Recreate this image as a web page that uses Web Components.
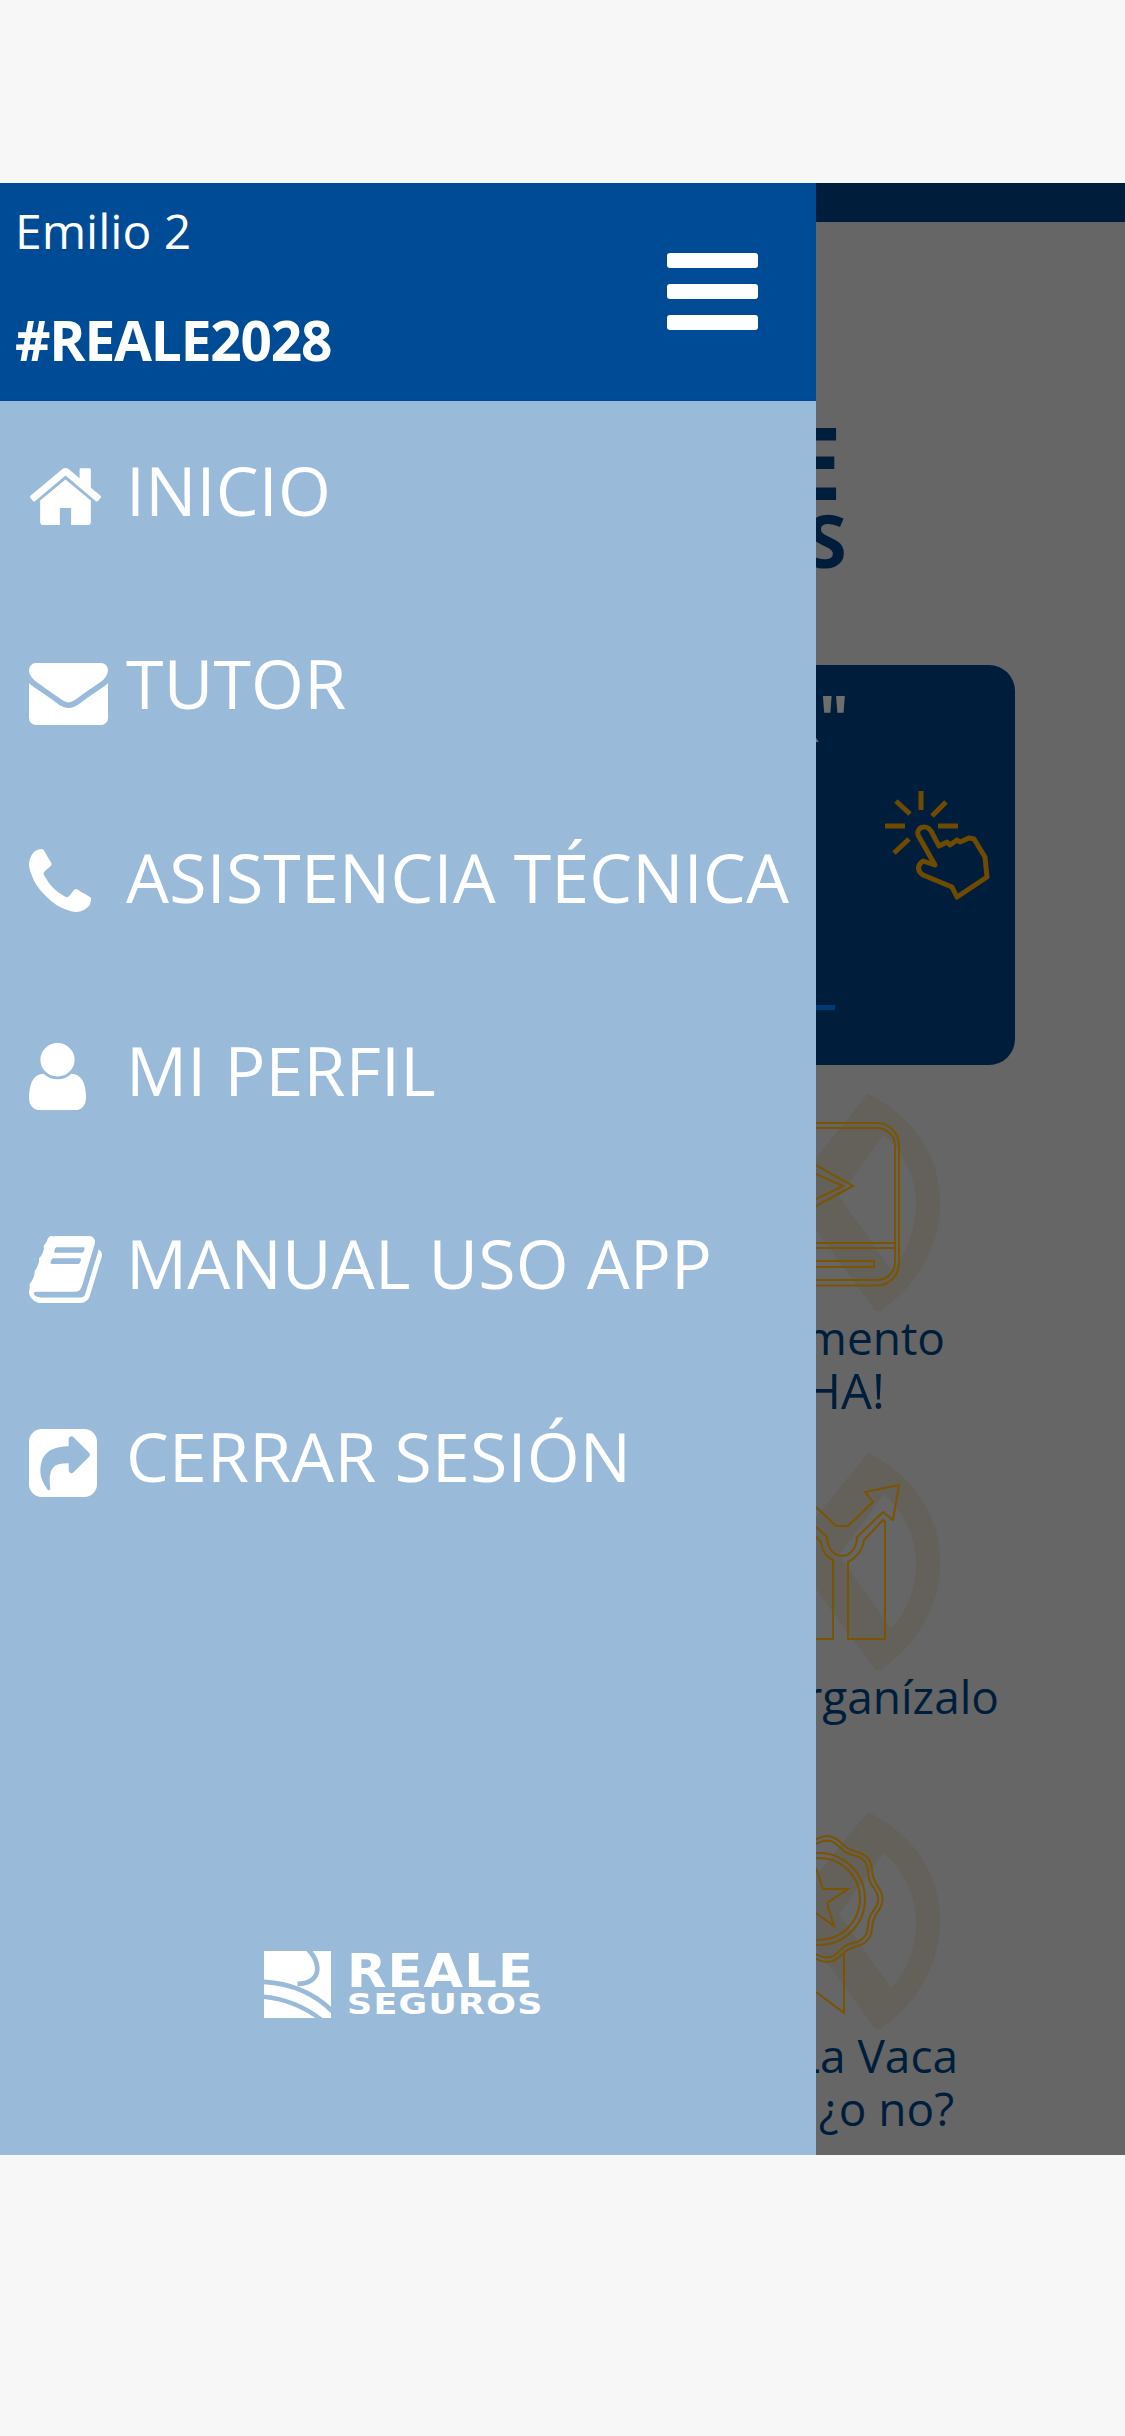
<!DOCTYPE html>
<html lang="es">
<head>
<meta charset="utf-8">
<title>Reale</title>
<style>
  html, body { margin: 0; padding: 0; background: #f7f7f7; }
</style>
</head>
<body>
<app-screen></app-screen>

<script>
const ICONS = {
  home: 'M1472 992v480q0 26-19 45t-45 19h-384v-384h-256v384h-384q-26 0-45-19t-19-45v-480q0-1 .5-3t.5-3l575-474 575 474q1 2 1 6zm223-69l-62 74q-8 9-21 11h-3q-13 0-21-7l-692-577-692 577q-12 8-24 7-13-2-21-11l-62-74q-8-10-7-23.500t11-21.500l719-599q32-26 76-26t76 26l244 204v-195q0-14 9-23t23-9h192q14 0 23 9t9 23v408l219 182q10 8 11 21.500t-7 23.500z',
  mail: 'M1792 710v794q0 66-47 113t-113 47h-1472q-66 0-113-47t-47-113v-794q44 49 101 87 362 246 497 345 57 42 92.500 65.500t94.500 48 110 24.500h2q51 0 110-24.500t94.500-48 92.500-65.500q170-123 498-345 57-39 100-87zm0-294q0 79-49 151t-122 123q-376 261-468 325-10 7-42.500 30.500t-54 38-52 32.500-57.500 27-50 9h-2q-23 0-50-9t-57.500-27-52-32.500-54-38-42.500-30.500q-91-64-262-182.500t-205-142.500q-62-42-117-115.500t-55-136.500q0-78 41.500-130t118.500-52h1472q65 0 112.500 47t47.500 113z',
  phone: 'M1600 1240q0 27-10 70.500t-21 68.500q-21 50-122 106-94 51-186 51-27 0-53-3.500t-57.500-12.500-47-14.500-55.500-20.500-49-18q-98-35-175-83-127-79-264-216t-216-264q-48-77-83-175-3-9-18-49t-20.500-55.500-14.500-47-12.500-57.500-3.500-53q0-92 51-186 56-101 106-122 25-11 68.500-21t70.500-10q14 0 21 3 18 6 53 76 11 19 30 54t35 63.500 31 53.500q3 4 17.500 25t21.500 35.500 7 28.500q0 20-28.500 50t-62 55-62 53-28.500 46q0 9 5 22.500t8.500 20.500 14 24 11.500 19q76 137 174 235t235 174q2 1 19 11.500t24 14 20.500 8.500 22.500 5q18 0 46-28.500t53-62 55-62 50-28.500q14 0 28.500 7t35.500 21.500 25 17.500q25 15 53.500 31t63.500 35 54 30q70 35 76 53 3 7 3 21z',
  user: 'M1536 1399q0 109-62.500 187t-150.500 78h-854q-88 0-150.500-78t-62.500-187q0-85 8.500-160.500t31.500-152 58.500-131 94-89 134.500-34.500q131 128 313 128t313-128q76 0 134.500 34.500t94 89 58.500 131 31.500 152 8.500 160.500zm-256-887q0 159-112.500 271.500t-271.500 112.500-271.500-112.500-112.500-271.500 112.500-271.500 271.500-112.500 271.500 112.500 112.500 271.500z',
  book: 'M1703 478q40 57 18 129l-275 906q-19 64-76.500 107.500t-122.500 43.500h-923q-77 0-148.500-53.500t-99.500-131.500q-24-67-2-127 0-4 3-27t4-37q1-8-3-21.500t-3-19.500q2-11 8-21t16.500-23.500 16.500-23.500q23-38 45-91.500t30-91.500q3-10 .5-30t-.5-28q3-11 17-28t17-23q21-36 42-92t25-90q1-9-2.500-32t.5-28q4-13 22-30.500t22-22.500q19-26 42.500-84.500t27.500-96.500q1-8-3-25.500t-2-26.500q2-8 9-18t18-23 17-21q8-12 16.500-30.500t15-35 16-36 19.500-32 26.500-23.500 36-11.500 47.500 5.500l-1 3q38-9 51-9h761q74 0 114 56t18 130l-274 906q-36 119-71.500 153.500t-128.500 34.500h-869q-27 0-38 15-11 16-1 43 24 70 144 70h923q29 0 56-15.500t35-41.500l300-987q7-22 5-57 38 15 59 43zm-1064 2q-4 13 2 22.500t20 9.500h608q13 0 25.500-9.500t16.500-22.500l21-64q4-13-2-22.500t-20-9.500h-608q-13 0-25.500 9.500t-16.500 22.500zm-83 256q-4 13 2 22.500t20 9.500h608q13 0 25.500-9.500t16.500-22.500l21-64q4-13-2-22.500t-20-9.500h-608q-13 0-25.500 9.500t-16.500 22.500z',
  share: 'M1005 1283l352-352q19-19 19-45t-19-45l-352-352q-30-31-69-14-40 17-40 59v160q-119 0-216 19.500t-162.500 51-114 79-76.500 95.500-44.500 109-21.500 111.500-5 110.500q0 181 167 404 11 12 25 12 7 0 13-3 22-9 19-33-44-354 62-473 46-52 130-75.500t224-23.500v160q0 42 40 59 12 5 24 5 26 0 45-19zm531-691v960q0 119-84.500 203.500t-203.500 84.500h-960q-119 0-203.500-84.500t-84.500-203.500v-960q0-119 84.500-203.500t203.500-84.500h960q119 0 203.500 84.500t84.500 203.500z'
};

class AppScreen extends HTMLElement {
  constructor() {
    super();
    this.attachShadow({ mode: 'open' });
    this.shadowRoot.innerHTML = `
      <style>
        :host {
          display: block;
          height: 2436px;
          box-sizing: border-box;
          padding: 183px 0 281px;
          background: #f7f7f7;
          font-family: "Open Sans", "Noto Sans", sans-serif;
        }
        .row { display: flex; height: 100%; }
      </style>
      <div class="row">
        <side-drawer></side-drawer>
        <dimmed-content></dimmed-content>
      </div>
    `;
  }
}

class SideDrawer extends HTMLElement {
  constructor() {
    super();
    this.attachShadow({ mode: 'open' });
    this.shadowRoot.innerHTML = `
      <style>
        :host {
          display: flex;
          flex-direction: column;
          flex: none;
          width: 816px;
          background: #99bad9;
          color: #fff;
        }
        nav { display: flex; flex-direction: column; gap: 13.3px; }
        reale-logo { margin-top: auto; margin-bottom: 137px; align-self: flex-start; margin-left: 264px; }
      </style>
      <drawer-header name="Emilio 2" tag="#REALE2028"></drawer-header>
      <nav>
        <nav-item icon="home" w="71" h="57" x="1" dy="5">INICIO</nav-item>
        <nav-item icon="mail" w="79" h="62" dy="9.5">TUTOR</nav-item>
        <nav-item icon="phone" w="62" h="63" dy="3">ASISTENCIA TÉCNICA</nav-item>
        <nav-item icon="user" w="57" h="67" dy="5.5">MI PERFIL</nav-item>
        <nav-item icon="book" w="73" h="67" dy="5">MANUAL USO APP</nav-item>
        <nav-item icon="share" w="68" h="68" dy="6">CERRAR SESIÓN</nav-item>
      </nav>
      <reale-logo></reale-logo>
    `;
  }
}

class DrawerHeader extends HTMLElement {
  constructor() {
    super();
    this.attachShadow({ mode: 'open' });
    this.shadowRoot.innerHTML = `
      <style>
        :host {
          display: flex;
          flex: none;
          justify-content: space-between;
          align-items: flex-start;
          height: 218px;
          box-sizing: border-box;
          padding: 18px 58px 0 0;
          background: #004b96;
        }
        .name { font-size: 48px; line-height: 60px; padding-left: 15px; }
        .tag {
          margin-top: 49px;
          padding-left: 15px;
          font-size: 55px;
          line-height: 60px;
          font-weight: 700;
          letter-spacing: -1.2px;
        }
        .menu { display: flex; flex-direction: column; gap: 15.5px; margin-top: 51.5px; }
        .menu i { display: block; width: 91px; height: 15.5px; border-radius: 3px; background: #fff; }
      </style>
      <div>
        <div class="name"></div>
        <div class="tag"></div>
      </div>
      <div class="menu"><i></i><i></i><i></i></div>
    `;
  }

  connectedCallback() {
    this.shadowRoot.querySelector('.name').textContent = this.getAttribute('name');
    this.shadowRoot.querySelector('.tag').textContent = this.getAttribute('tag');
  }
}

class NavItem extends HTMLElement {
  constructor() {
    super();
    this.attachShadow({ mode: 'open' });
    this.shadowRoot.innerHTML = `
      <style>
        :host {
          display: flex;
          align-items: center;
          height: 180px;
          padding-left: 29px;
          font-size: 68px;
          letter-spacing: .2px;
          white-space: nowrap;
        }
        .icon { flex: none; width: 97px; display: flex; }
        svg { display: block; fill: #fff; }
        span { padding-bottom: 3px; }
      </style>
      <div class="icon">
        <svg xmlns="http://www.w3.org/2000/svg" preserveAspectRatio="none"><path/></svg>
      </div>
      <span><slot></slot></span>
    `;
  }

  connectedCallback() {
    const svg = this.shadowRoot.querySelector('svg');
    const path = svg.querySelector('path');
    path.setAttribute('d', ICONS[this.getAttribute('icon')]);
    svg.setAttribute('width', this.getAttribute('w'));
    svg.setAttribute('height', this.getAttribute('h'));
    // the glyphs sit on a 1792 grid with uneven margins, fit the box to the shape
    const box = path.getBBox();
    svg.setAttribute('viewBox', `${box.x} ${box.y} ${box.width} ${box.height}`);
    const icon = this.shadowRoot.querySelector('.icon');
    icon.style.marginTop = (this.getAttribute('dy') * 2) + 'px';
    if (this.hasAttribute('x')) {
      icon.style.paddingLeft = this.getAttribute('x') + 'px';
      icon.style.width = (97 - this.getAttribute('x')) + 'px';
    }
  }
}

class RealeLogo extends HTMLElement {
  constructor() {
    super();
    this.attachShadow({ mode: 'open' });
    this.shadowRoot.innerHTML = `
      <style>
        :host { display: flex; gap: 16px; color: #fff; font-family: "DejaVu Sans", sans-serif; font-weight: 700; }
        svg { display: block; flex: none; }
        .words { display: flex; flex-direction: column; }
        .big, .small { white-space: nowrap; transform-origin: left center; }
        .big { font-size: 46.5px; line-height: 40px; height: 40px; letter-spacing: 1px; transform: scaleX(1.1); }
        .small { font-size: 27.5px; line-height: 26px; letter-spacing: 1px; transform: scaleX(1.27); }
      </style>
      <svg width="67" height="67" viewBox="0 0 200 200" xmlns="http://www.w3.org/2000/svg">
        <rect width="200" height="200" fill="#fff"/>
        <g fill="none" stroke="#99bad9">
          <path stroke-width="14" d="M132 -4C165 30 168 70 140 88C128 96 115 98 100 98"/>
          <path stroke-width="14" d="M-4 92C75 96 150 125 206 182"/>
          <path stroke-width="13" d="M-4 136C60 142 120 165 172 206"/>
        </g>
      </svg>
      <div class="words">
        <div class="big">REALE</div>
        <div class="small">SEGUROS</div>
      </div>
    `;
  }
}

class DimmedContent extends HTMLElement {
  constructor() {
    super();
    this.attachShadow({ mode: 'open' });
    this.shadowRoot.innerHTML = `
      <style>
        :host {
          display: block;
          flex: 1;
          min-width: 0;
          background: #666;
          overflow: hidden;
          color: #001e3c;
          font-weight: 700;
        }
        .bar { height: 39px; background: #001e3c; }
        .title { padding-top: 193px; white-space: nowrap; }
        .title div:first-child { font-size: 100px; line-height: 92px; margin-left: -30px; }
        .title div:last-child { font-size: 74px; line-height: 66px; margin-left: -10px; }
        promo-card { margin: 92px 110px 28px -60px; }
      </style>
      <div class="bar"></div>
      <div class="title"><div>E</div><div>S</div></div>
      <promo-card></promo-card>
      <topic-tile kind="video">
        <div>mento</div>
        <div style="margin-right: 60px; font-size: 49px">HA!</div>
      </topic-tile>
      <topic-tile kind="chart"><div>rganízalo</div></topic-tile>
      <topic-tile kind="medal">
        <div style="margin-right: -2px">La Vaca</div>
        <div style="margin-right: 2px">¿o no?</div>
      </topic-tile>
    `;
  }
}

class PromoCard extends HTMLElement {
  constructor() {
    super();
    this.attachShadow({ mode: 'open' });
    this.shadowRoot.innerHTML = `
      <style>
        :host {
          display: block;
          height: 400px;
          box-sizing: border-box;
          padding-top: 21px;
          background: #001e3c;
          border-radius: 26px;
        }
        .head {
          width: 93px;
          display: flex;
          justify-content: flex-end;
          font-size: 64px;
          line-height: 63px;
          font-weight: 700;
          color: #6e6e6e;
        }
        svg { display: block; margin: 21px 0 0 104px; }
        .line { width: 79px; height: 5px; margin-top: 84.5px; background: #003a75; }
      </style>
      <div class="head">R"</div>
      <svg width="150" height="150" viewBox="0 0 150 150" fill="none" stroke="#6e4b00" stroke-width="5" xmlns="http://www.w3.org/2000/svg">
        <path d="M61 21V40M36 31L50 44M86 32L72 46M25 56H45M78 56H98M49 69L34 83"/>
        <path stroke-linejoin="round" d="M58 65C56 58 66 53 71 61L79 76L87 72L90 75L97 70L100 72L109 68L114 69L125 87L127 107L97 127L92 117L63 105C57 101 57 95 63 91L75 95Z"/>
      </svg>
      <div class="line"></div>
    `;
  }
}

function scallop(r) {
  // wavy seal rim around the medal centre
  const pts = [];
  for (let i = 0; i <= 240; i++) {
    const t = i / 240 * Math.PI * 2;
    const rr = r + 2.6 * Math.cos(9 * t);
    pts.push((3 + rr * Math.cos(t)).toFixed(1) + ' ' + (88 + rr * Math.sin(t)).toFixed(1));
  }
  return 'M' + pts.join('L') + 'Z';
}

const TILE_ART = {
  video: `
    <rect x="-100" y="30" width="183" height="162.5" rx="22"/>
    <rect x="-100" y="35" width="179" height="152" rx="18"/>
    <path d="M-5 150H79M-5 155H79M-5 168H58V174H-5"/>
    <path d="M0 72L37 93L0 113M0 81L27 93L0 106"/>`,
  chart: `
    <path stroke-linejoin="round" d="M0 55L20 74H32L57 50L49 40L83 33L77 68L67 60L41 85A15 19 0 0 1 11 85L0 75"/>
    <path d="M0 85L5 90C6 100 10 105 17 108V187H0M48 88C47 98 40 106 32 110V187H69V70L67 68L48 88"/>`,
  medal: `
    <path d="${scallop(61)}"/>
    <path d="${scallop(56.5)}"/>
    <circle cx="3" cy="88" r="46"/>
    <circle cx="3" cy="88" r="41"/>
    <path d="M0 57L7 78H32L11 92L18 115L0 102"/>
    <path d="M28 143V202L0 181"/>`
};

class TopicTile extends HTMLElement {
  constructor() {
    super();
    this.attachShadow({ mode: 'open' });
    this.shadowRoot.innerHTML = `
      <style>
        :host { display: block; height: 359px; overflow: hidden; }
        svg { display: block; }
        .label {
          display: flex;
          flex-direction: column;
          align-items: flex-end;
          font-size: 46px;
          line-height: 53px;
          font-weight: 400;
          white-space: nowrap;
          color: #001e3c;
        }
        ::slotted(div) { flex: none; }
      </style>
      <svg width="309" height="218" viewBox="0 0 309 218" xmlns="http://www.w3.org/2000/svg">
        <path fill="#63615a" fill-rule="evenodd" d="M0 65L52 1C100 25 124 65 124 110C124 155 100 195 61 220L0 137ZM68 42L23 103L75 177C92 160 100 135 100 110C100 85 88 60 68 42Z"/>
        <g class="art" fill="none" stroke="#7a5400" stroke-width="2"></g>
      </svg>
      <div class="label"><slot></slot></div>
    `;
  }

  connectedCallback() {
    const kind = this.getAttribute('kind');
    this.shadowRoot.querySelector('.art').innerHTML = TILE_ART[kind];
    const label = this.shadowRoot.querySelector('.label');
    // right edges of the clipped captions differ from tile to tile
    label.style.paddingRight = { video: '180px', chart: '126px', medal: '169px' }[kind];
  }
}

customElements.define('app-screen', AppScreen);
customElements.define('side-drawer', SideDrawer);
customElements.define('drawer-header', DrawerHeader);
customElements.define('nav-item', NavItem);
customElements.define('reale-logo', RealeLogo);
customElements.define('dimmed-content', DimmedContent);
customElements.define('promo-card', PromoCard);
customElements.define('topic-tile', TopicTile);
</script>
</body>
</html>
